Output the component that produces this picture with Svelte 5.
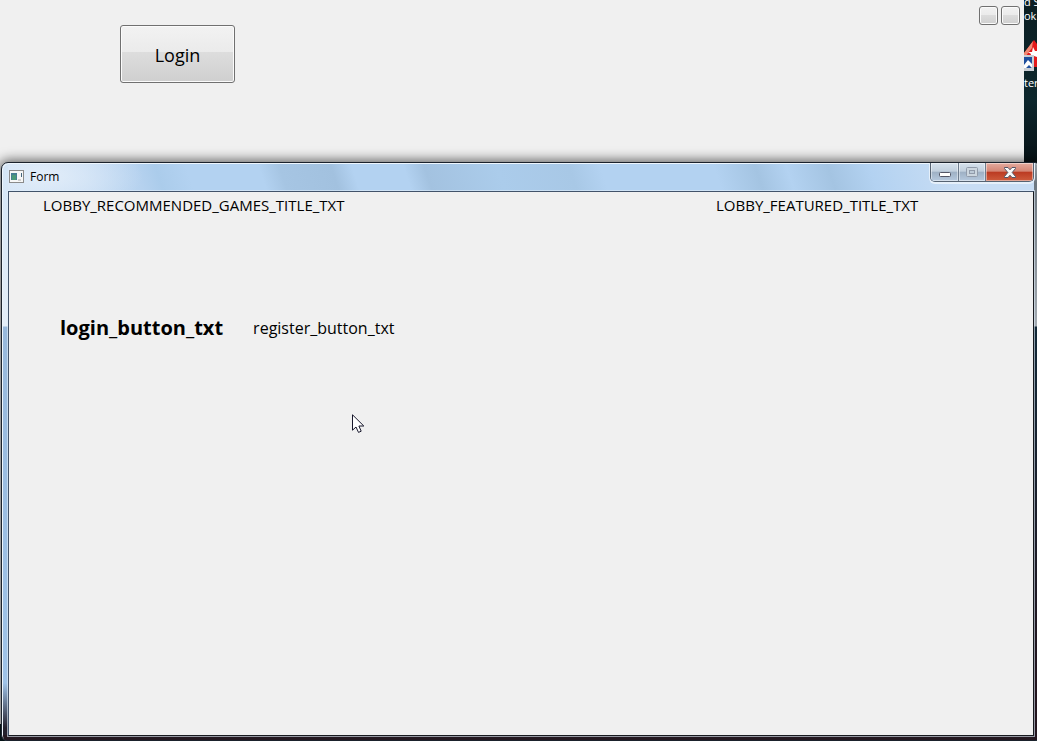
<!--
  Desktop with the launcher window in the back and the translated "Form" window in front.
-->
<script lang="ts">
	let { title = 'Form' }: { title?: string } = $props();

	const headings = ['LOBBY_RECOMMENDED_GAMES_TITLE_TXT', 'LOBBY_FEATURED_TITLE_TXT'];
</script>

<div class="desktop">
	<section class="launcher">
		<button class="push login">Login</button>
		<div class="small-buttons">
			<button class="push small" aria-label="Option 1"></button>
			<button class="push small" aria-label="Option 2"></button>
		</div>
	</section>

	<aside class="shortcuts">
		<span class="shortcut-label first">d S</span>
		<span class="shortcut-label">ok</span>
		<svg class="shortcut-icon" width="13" height="34" viewBox="0 0 13 34" aria-hidden="true">
			<path d="M0 14 L10 1 L13 5 V28 H0Z" fill="#e31b1b" />
			<path d="M0 14 L9 2 L8 9 L4 14 L2 17H0Z" fill="#f08a74" />
			<path d="M9 8 L11 12 L13 12 V18 L10 17 L6 19 L7 15 L4 13 H8Z" fill="#fff" />
			<path d="M0 16 H10 V32 H0Z" fill="#c9ced4" />
			<path d="M0 18 H8 V29 H0Z" fill="#1f4f9d" />
			<path d="M0 29 V26 L4 21 L8 25 V29 L5 26 L2 29Z" fill="#fff" />
		</svg>
		<span class="shortcut-label">ter</span>
	</aside>

	<section class="window">
		<header class="titlebar">
			<svg class="app-icon" width="16" height="14" viewBox="0 0 16 14" aria-hidden="true">
				<rect x="0.5" y="0.5" width="14" height="12" fill="#f7f7f7" stroke="#8b8b8b" />
				<rect x="2" y="3" width="6" height="7" fill="#477f91" />
				<rect x="3" y="5" width="4" height="5" fill="#4c9a78" />
				<rect x="9" y="9" width="3" height="2" fill="#cfcfcf" />
				<rect x="12" y="3" width="1" height="4" fill="#43657d" />
			</svg>
			<h1>{title}</h1>
			<div class="controls">
				<button class="control minimize" aria-label="Minimize">
					<svg width="12" height="5" viewBox="0 0 12 5">
						<rect x="0.5" y="0.5" width="11" height="4" rx="1" fill="#fff" stroke="#535666" />
					</svg>
				</button>
				<button class="control maximize" aria-label="Maximize" disabled>
					<svg width="12" height="10" viewBox="0 0 12 10">
						<rect x="0.5" y="0.5" width="11" height="9" rx="1" fill="#ccd6df" stroke="#919baa" />
						<rect x="3.5" y="3.5" width="5" height="3" fill="#bdcad7" stroke="#919baa" />
					</svg>
				</button>
				<button class="control close" aria-label="Close">
					<svg width="12" height="11" viewBox="0 0 12 11">
						<path
							d="M0.5 0.5 H4 L6 2.8 L8 0.5 H11.5 V1.5 L8.2 5.5 L11.5 9.5 V10.5 H8 L6 8.2 L4 10.5 H0.5 V9.5 L3.8 5.5 L0.5 1.5Z"
							fill="#f8f8f8"
							stroke="#535666"
						/>
					</svg>
				</button>
			</div>
		</header>

		<main class="client">
			<div class="headings">
				{#each headings as heading}
					<h2>{heading}</h2>
				{/each}
			</div>
			<div class="actions">
				<button class="link strong">login_button_txt</button>
				<button class="link">register_button_txt</button>
			</div>
		</main>
	</section>

	<svg class="cursor" width="13" height="20" viewBox="0 0 13 20" aria-hidden="true">
		<path
			d="M0.5 0.8 V16.2 L4 13 L6.5 18.4 L9.2 17.2 L6.9 12 H11.8Z"
			fill="#fff"
			stroke="#17172b"
		/>
	</svg>
</div>

<style>
	:global(body) {
		margin: 0;
		font-family: 'Open Sans', 'Noto Sans', sans-serif;
		color: #000;
	}

	.desktop {
		position: relative;
		display: flex;
		min-height: 100vh;
		overflow: hidden;
		background: #07191d;
	}

	.launcher {
		display: flex;
		flex: 1;
		align-items: flex-start;
		justify-content: space-between;
		margin-bottom: 17px;
		background: #f0f0f0;
	}

	.push {
		box-sizing: border-box;
		padding: 0;
		border: 1px solid #707070;
		border-radius: 3px;
		background: linear-gradient(#f2f2f2, #ebebeb 46%, #dddddd 47%, #cfcfcf);
		box-shadow: inset 0 0 0 1px #fbfbfb;
		font-family: inherit;
		color: #000;
	}

	.login {
		width: 115px;
		height: 58px;
		margin: 25px 0 0 120px;
		padding-top: 2px;
		font-size: 18px;
	}

	.small-buttons {
		display: flex;
		gap: 3px;
		padding: 6px 4px 0 0;
	}

	.small {
		width: 19px;
		height: 19px;
	}

	.shortcuts {
		display: flex;
		flex-direction: column;
		width: 13px;
		overflow: hidden;
		background: linear-gradient(#0b1e22, #0d272d 100px, #071216 160px, #071216);
	}

	.shortcut-label {
		font-size: 11px;
		line-height: 14px;
		white-space: nowrap;
		color: #fff;
	}

	.first {
		margin-top: -5px;
	}

	.shortcut-icon {
		margin: 16px 0 3px;
	}

	/* The glass frame runs past the right edge of the screen */
	.window {
		position: absolute;
		top: 162px;
		right: -4px;
		bottom: 0;
		left: 1px;
		box-sizing: border-box;
		display: flex;
		flex-direction: column;
		padding: 0 6px 4px;
		border: 1px solid #1b222c;
		border-radius: 7px 7px 6px 6px;
		background:
			linear-gradient(#9aa0a6, #6d7780 20px, #a4abb2 163px, #132938 164px, #23151e 90%) right / 6px 100% no-repeat,
			linear-gradient(#241820, #241820) bottom / 100% 5px no-repeat,
			linear-gradient(#d4e5f6, #e4eef8 163px, #98b9dc 164px, #9fc3e8 520px, #24202c 565px) left / 6px 100% no-repeat,
			#b4d2ef;
		box-shadow:
			inset 1px 1px 0 #eef6fd,
			0 0 12px 2px rgba(0, 0, 0, 0.6);
	}

	.titlebar {
		display: flex;
		align-items: flex-start;
		height: 27px;
		margin-top: 1px;
		background:
			radial-gradient(ellipse 100px 40px at 35px 12px, #e2edf9, rgba(216, 231, 247, 0)),
			linear-gradient(
				72deg,
				#cfe1f5 0,
				#c4dbf3 8%,
				#b6d2ef 13%,
				#abcceb 15%,
				#b3d2f1 18%,
				#b3d2f1 25%,
				#a6c5e3 27%,
				#a2c1df 32%,
				#b3d2f1 34%,
				#b3d2f1 39%,
				#a3c2e0 41%,
				#abcceb 48%,
				#a8c8e6 55%,
				#b3d2f1 58%,
				#b3d2f1 69%,
				#a4c4e2 73%,
				#b3d2f1 76%,
				#a4c4e2 80%,
				#b3d2f1 84%,
				#c8ddf4 92%
			);
	}

	.app-icon {
		margin: 6px 0 0 1px;
	}

	h1 {
		flex: 1;
		margin: 5px 0 0 5px;
		font-size: 12px;
		line-height: 16px;
		font-weight: 400;
	}

	.controls {
		display: flex;
		height: 18px;
		margin-top: -1px;
		overflow: hidden;
		border: 1px solid #566372;
		border-top: 0;
		border-radius: 0 0 5px 5px;
		box-shadow: 0 1px 0 1px #e6f0fa;
	}

	.control {
		display: flex;
		align-items: center;
		justify-content: center;
		box-sizing: border-box;
		width: 27px;
		padding: 0;
		border: 0;
		border-right: 1px solid #6d7b8c;
		background: linear-gradient(#d6e2ed, #c1cfdd 46%, #9eb0c4 50%, #b6c9de);
		box-shadow: inset 0 0 0 1px rgba(255, 255, 255, 0.45);
	}

	.minimize {
		width: 28px;
		padding-top: 5px;
	}

	.close {
		width: 47px;
		border-right: 0;
		background: linear-gradient(#e4ab9f, #d48574 46%, #bb3a22 50%, #ce5c3d);
	}

	.client {
		flex: 1;
		border: 1px solid #42536a;
		border-right-color: #17191e;
		border-bottom-color: #17191e;
		background: #f0f0f0;
		box-shadow: 0 0 0 1px rgba(225, 238, 250, 0.6);
	}

	/* The second heading starts about two thirds across the client area */
	.headings {
		display: grid;
		grid-template-columns: 673fr 317fr;
		padding: 3px 0 0 34px;
	}

	h2 {
		margin: 0;
		font-size: 15px;
		line-height: 20px;
		font-weight: 400;
	}

	.actions {
		display: flex;
		align-items: center;
		gap: 30px;
		padding: 98px 0 0 51px;
	}

	.link {
		padding: 0;
		border: 0;
		background: none;
		font-family: inherit;
		font-size: 16px;
		line-height: 30px;
		color: #000;
	}

	.strong {
		font-size: 20px;
		font-weight: 700;
	}

	.cursor {
		position: absolute;
		top: 414px;
		left: 352px;
	}
</style>
